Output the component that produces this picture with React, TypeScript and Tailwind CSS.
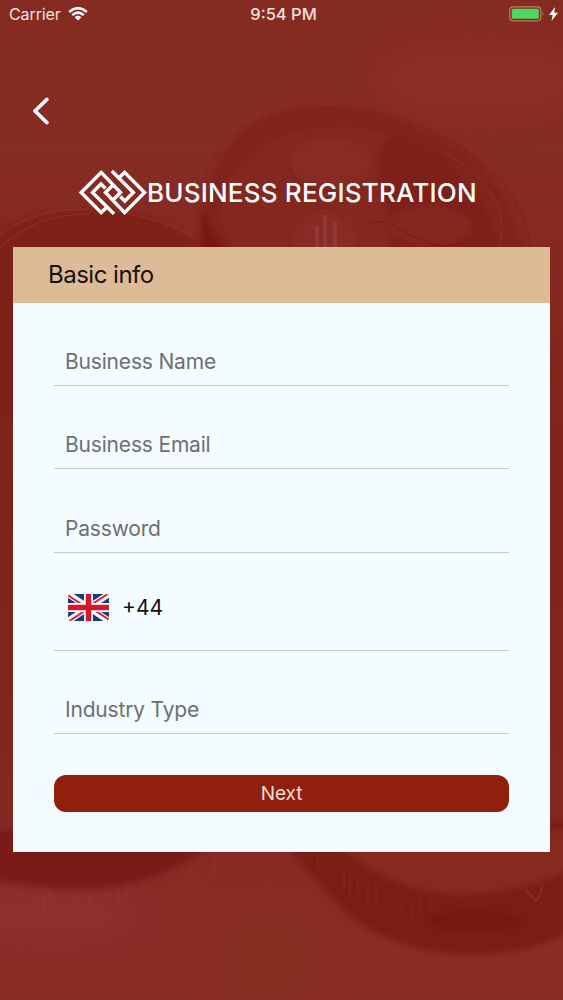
import type { ReactNode } from "react";

function Backdrop() {
  return (
    <svg
      className="absolute inset-0 h-full w-full"
      viewBox="0 0 563 1000"
      aria-hidden="true"
    >
      <defs>
        <filter id="soft" x="-20%" y="-20%" width="140%" height="140%" colorInterpolationFilters="sRGB">
          <feGaussianBlur stdDeviation="3" />
        </filter>
        <filter id="haze" x="-60%" y="-100%" width="220%" height="300%" colorInterpolationFilters="sRGB">
          <feGaussianBlur stdDeviation="16" />
        </filter>
        <linearGradient id="base" x1="0" y1="0" x2="0" y2="1">
          <stop offset="0" stopColor="#862b22" />
          <stop offset="0.15" stopColor="#872c25" />
          <stop offset="0.3" stopColor="#83271f" />
          <stop offset="0.5" stopColor="#7f221b" />
          <stop offset="0.8" stopColor="#842720" />
          <stop offset="0.9" stopColor="#892c26" />
          <stop offset="1" stopColor="#892d27" />
        </linearGradient>
      </defs>
      <rect width="563" height="1000" fill="url(#base)" />
      <ellipse cx="480" cy="80" rx="100" ry="30" fill="#8c3029" filter="url(#haze)" />
      <ellipse cx="50" cy="915" rx="90" ry="25" fill="#8d3130" filter="url(#haze)" />
      <ellipse cx="270" cy="960" rx="50" ry="60" fill="#862d20" filter="url(#haze)" />

      {/* Upper coin */}
      <g filter="url(#soft)">
        <path d="M202 250 C198 90 330 85 430 132 C515 172 535 225 532 420 L240 420Z" fill="#7f231c" />
        <path d="M220 210 C230 125 350 105 430 150 C490 185 505 220 503 290 L240 290Z" fill="#84271f" />
        <path d="M392 135 C450 150 500 195 503 280 L380 280 C410 220 355 160 392 135Z" fill="#7d2019" />
        <ellipse cx="330" cy="162" rx="42" ry="24" fill="#882b24" />
        <ellipse cx="430" cy="226" rx="42" ry="21" fill="#85261f" />
        <ellipse cx="325" cy="240" rx="32" ry="28" fill="#892b25" />
        <path d="M202 205 Q207 230 232 256 L200 256Z" fill="#771810" />
      </g>
      <g fill="none" stroke="#741b14" strokeWidth="1.5" opacity="0.5">
        <path d="M290 167 Q295 190 326 191" />
        <path d="M370 224 C390 216 397 232 418 238 Q445 254 468 238" />
        <path d="M204 188 C214 105 340 88 430 130 Q525 178 530 247" strokeDasharray="7 2" opacity="0.6" />
        <path d="M500 247 Q512 190 445 153" stroke="#93362d" opacity="0.7" />
      </g>
      <path d="M317 226v21M325 215v32M335 222v25" stroke="#994a49" strokeWidth="4" opacity="0.45" />

      {/* Left coin */}
      <path d="M-20 240 Q30 207 90 210 Q165 205 205 256 V420 H-20Z" fill="#7d2119" filter="url(#soft)" />
      <path
        d="M0 234 C50 200 120 201 194 236 M0 248 C30 220 55 215 90 214"
        fill="none"
        stroke="#923c32"
        strokeWidth="1.5"
        opacity="0.5"
      />

      {/* Lower coins */}
      <g filter="url(#soft)">
        <path d="M-20 830 H230 Q165 890 70 890 Q20 885 -20 878Z" fill="#7a1b17" />
        <path d="M270 820 H583 V925 C510 970 410 960 355 920 Q310 880 270 820Z" fill="#7b1d15" />
        <path d="M325 830 H583 V863 Q530 893 460 894 C410 893 365 875 325 830Z" fill="#862a1f" />
        <ellipse cx="475" cy="921" rx="48" ry="10" fill="#75180e" />
      </g>
      <g stroke="#98424a" opacity="0.35">
        <path d="M38 890v28M44 891v26M50 890v30M78 892v17M89 893v14M107 892v12M119 888v17M126 886v18M142 880v12M214 858v20M192 863v12" />
        <path d="M318 855v15M344 870v20M350 874v22M358 878v16M368 882v22M376 885v18M402 900v11M412 901v15M420 900v15M430 897v14" />
      </g>
      <path d="M526 890l10 11q6-8 6-16" fill="none" stroke="#91352d" strokeWidth="2" opacity="0.6" />
    </svg>
  );
}

function StatusBar() {
  return (
    <div className="grid h-7 grid-cols-3 items-center pl-[9px] pr-[5px] text-[#fbe3df]">
      <div className="flex items-center gap-[7px]">
        <span className="w-[52px] text-base tracking-[-0.1px]">Carrier</span>
        <svg
          className="h-[14px] w-[20px]"
          viewBox="0 0 20 14"
          fill="none"
          stroke="#fff"
          strokeWidth="2.6"
        >
          <path d="M1.2 5 Q10-2.6 18.8 5M4.3 8.1 Q10 3 15.7 8.1" />
          <path d="M10 13.6 6.6 10.2 Q10 7.4 13.4 10.2Z" fill="#fff" stroke="none" />
        </svg>
      </div>
      <span className="text-center text-[16.5px] font-medium">9:54 PM</span>
      <div className="flex items-center justify-end gap-1">
        <svg className="h-4 w-9" viewBox="0 0 36 16">
          <rect x="0.8" y="0.8" width="31" height="14" rx="3.5" fill="none" stroke="#b98057" strokeWidth="1.2" />
          <rect x="2.8" y="2.8" width="27" height="10" rx="1.5" fill="#4bd964" />
          <path d="M33.5 5.5q2 2.3 0 4.6z" fill="#b77068" />
        </svg>
        <svg className="h-[14px] w-[9px]" viewBox="0 0 9 14" fill="#fff">
          <path d="M6 0 0 8h3.7L2.5 14 9 5.7H5.2z" />
        </svg>
      </div>
    </div>
  );
}

function Logo() {
  return (
    <svg
      className="h-[45px] w-[68px] shrink-0"
      viewBox="0 0 68 45"
      fill="none"
      stroke="#fff"
      strokeWidth="3.4"
    >
      <path d="M27 38 22.2 42.6 2.2 22.5 22.2 2.4 41.5 22.5 34 30" />
      <path d="M40.8 7 45.6 2.4 65.6 22.5 45.6 42.6 26.5 22.5 34 15" />
      <path d="M35 44 13.5 22.5 22 14 26.5 18.5" />
      <path d="M32.8 1 54.3 22.5 45.8 31 41.3 26.5" />
    </svg>
  );
}

function UkFlag() {
  return (
    <svg
      className="h-[27px] w-[41px] rounded-[3px]"
      viewBox="0 0 60 40"
      preserveAspectRatio="none"
    >
      <rect width="60" height="40" fill="#173a86" />
      <path d="M0 0 60 40M60 0 0 40" stroke="#fff" strokeWidth="9" />
      <path d="M0 2 24 18M60 38 36 22M58 0 34 16M2 40 26 24" stroke="#d42740" strokeWidth="3" />
      <path d="M30 0V40M0 20H60" stroke="#fff" strokeWidth="13" />
      <path d="M30 0V40M0 20H60" stroke="#d3182f" strokeWidth="8" />
    </svg>
  );
}

function Field({ children, className }: { children: ReactNode; className: string }) {
  return (
    <div
      className={`flex items-end border-b-[1.5px] border-[#c5c9d0] pl-[11px] text-[21px] leading-6 tracking-[-0.18px] text-[#6c7074] ${className}`}
    >
      {children}
    </div>
  );
}

export default function App() {
  return (
    <div className="relative h-[1000px] w-[563px] overflow-hidden font-['Inter',sans-serif]">
      <Backdrop />
      <div className="relative flex flex-col">
        <StatusBar />

        <button type="button" className="mt-[69px] ml-[32px] h-7 w-[18px]" aria-label="Back">
          <svg
            viewBox="0 0 18 28"
            fill="none"
            stroke="#fff"
            strokeWidth="3.8"
            strokeLinecap="round"
            strokeLinejoin="round"
          >
            <path d="M14.8 2.5 3 14 14.8 25.5" />
          </svg>
        </button>

        <header className="mt-[45px] ml-[79px] flex h-[45px] items-center text-white">
          <Logo />
          <h1 className="whitespace-nowrap text-[26px] font-medium leading-8 tracking-[0.2px]">
            BUSINESS REGISTRATION
          </h1>
        </header>

        <main className="mt-8 ml-[13px] h-[605px] w-[537px] bg-[#f5fcff]">
          <h2 className="flex h-14 items-center bg-[#dcbb96] pl-[35px] text-2xl tracking-[-0.5px] text-[#15120e]">
            Basic info
          </h2>
          <form className="mx-[41px]">
            <Field className="h-[83px] pb-[11px]">Business Name</Field>
            <Field className="h-[83px] pb-[11px]">Business Email</Field>
            <Field className="h-[84px] pb-[11px]">Password</Field>
            <Field className="h-[98px] pb-[29px]">
              <div className="flex items-center gap-[13px] pl-[3px] text-[#111]">
                <UkFlag />
                <span className="tracking-normal">+44</span>
              </div>
            </Field>
            <Field className="h-[83px] pb-[11px]">Industry Type</Field>
            <button
              type="button"
              className="mt-[41px] h-[37px] w-full rounded-xl bg-[#911f0e] text-[19px] leading-6 tracking-[-0.1px] text-[#f8dfd8]"
            >
              Next
            </button>
          </form>
        </main>
      </div>
    </div>
  );
}
